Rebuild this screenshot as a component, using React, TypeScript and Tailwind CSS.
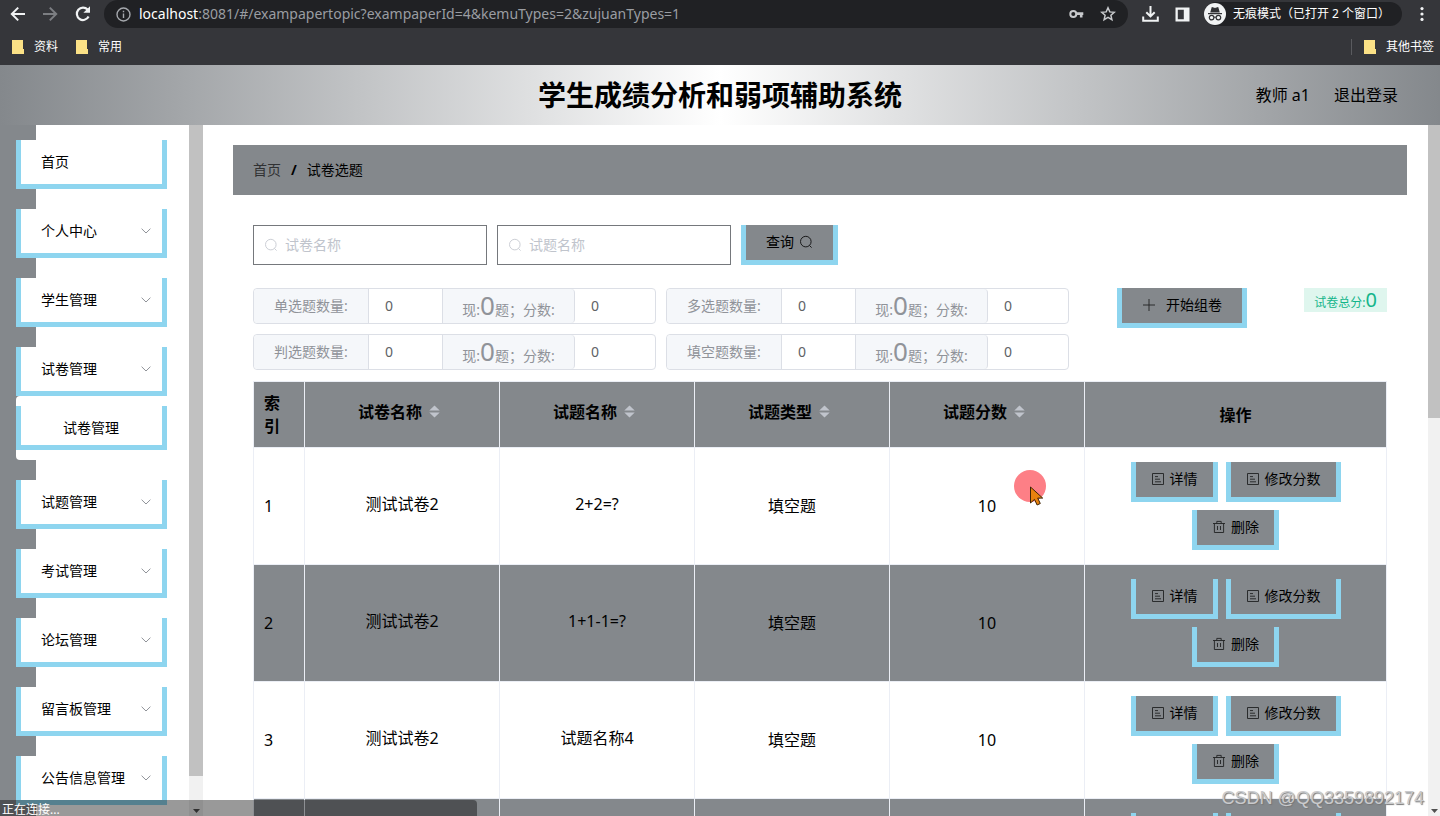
import { ReactNode } from "react";

const menus = [
    { name: "首页", arrow: false },
    { name: "个人中心", arrow: true },
    { name: "学生管理", arrow: true },
    { name: "试卷管理", arrow: true, children: ["试卷管理"] },
    { name: "试题管理", arrow: true },
    { name: "考试管理", arrow: true },
    { name: "论坛管理", arrow: true },
    { name: "留言板管理", arrow: true },
    { name: "公告信息管理", arrow: true },
];

const counts = ["单选题数量:", "多选题数量:", "判选题数量:", "填空题数量:"];

const columns = ["试卷名称", "试题名称", "试题类型", "试题分数"];

const topics = [
    { id: 1, paper: "测试试卷2", title: "2+2=?", type: "填空题", score: 10 },
    { id: 2, paper: "测试试卷2", title: "1+1-1=?", type: "填空题", score: 10 },
    { id: 3, paper: "测试试卷2", title: "试题名称4", type: "填空题", score: 10 },
    { id: 4, paper: "测试试卷2", title: "试题名称3", type: "填空题", score: 10 },
];

/* Icons */
const SearchIcon = () => (
    <svg className="size-[14px] shrink-0 opacity-80" viewBox="0 0 14 14" fill="none" stroke="currentColor">
        <circle cx="6.8" cy="6.6" r="5.3" />
        <path d="M10.4 10.4 12.6 12.6" />
    </svg>
);

const DocumentIcon = () => (
    <svg className="size-[14px] shrink-0 opacity-75" viewBox="0 0 14 14" fill="none" stroke="currentColor" strokeWidth="0.9">
        <path d="M1.5 1.5h11v11h-11zM4 4.6h3M4 7.2h5M4 9.8h6" />
    </svg>
);

const TrashIcon = () => (
    <svg className="size-[14px] shrink-0 opacity-75" viewBox="0 0 14 14" fill="none" stroke="currentColor" strokeWidth="0.9">
        <path d="M1 3.5h12M4.8 3.3V1.4h4.4v1.9M2.4 3.5v9h9.2v-9M5.5 6v4M8.5 6v4" />
    </svg>
);

const PlusIcon = () => (
    <svg className="size-[14px] shrink-0 opacity-75" viewBox="0 0 14 14" fill="none" stroke="currentColor" strokeWidth="0.9">
        <path d="M7 1v12M1 7h12" />
    </svg>
);

const ArrowDown = () => (
    <svg className="w-[10px] h-[6px]" viewBox="0 0 10 6" fill="none" stroke="#909399">
        <path d="M0.6 0.7 5 5 9.4 0.7" />
    </svg>
);

const SortIcon = () => (
    <svg className="w-[11px] h-[13px]" viewBox="0 0 11 13" fill="#c0c4cc">
        <path d="M5.5 0.5 10.7 5.5H0.3zM5.5 12.5 0.3 7.5h10.4z" />
    </svg>
);

const FolderIcon = () => (
    <svg className="w-[12px] h-[14px]" viewBox="0 0 12 14">
        <path d="M0 0h11v9h1v5H0z" fill="#fbe186" />
    </svg>
);

const ScrollArrow = () => (
    <svg className="w-[7px] h-[4px] mb-[3px]" viewBox="0 0 7 4" fill="#505050">
        <path d="M0 0h7L3.5 4z" />
    </svg>
);

const BlueButton = ({ children, wide }: { children: ReactNode; wide?: boolean }) => (
    <button
        type="button"
        className={`h-10 shrink-0 flex items-center gap-[5px] border-[5px] border-t-0 border-[#8ed5ef] bg-[#84888c] pb-px text-sm text-black ${wide ? "px-5" : "px-[15px]"
            }`}
    >
        {children}
    </button>
);

const BrowserBar = () => (
    <div className="shrink-0 bg-[#35363a] text-[#e8eaed]">
        <div className="h-7 flex items-center pl-[10px] pr-4">
            <button type="button" aria-label="back">
                <svg className="size-4" viewBox="0 0 16 16" fill="none" stroke="#f1f3f4" strokeWidth="2">
                    <path d="M15 8H2M8.2 1.6 1.8 8l6.4 6.4" />
                </svg>
            </button>
            <button type="button" aria-label="forward" className="ml-4">
                <svg className="size-4" viewBox="0 0 16 16" fill="none" stroke="#7c7e82" strokeWidth="2">
                    <path d="M1 8h13M7.8 1.6 14.2 8l-6.4 6.4" />
                </svg>
            </button>
            <button type="button" aria-label="reload" className="ml-4">
                <svg className="size-[18px]" viewBox="0 0 18 18" fill="none" stroke="#f1f3f4" strokeWidth="2.2">
                    <path d="M14.6 11.6A6.2 6.2 0 1 1 13.6 4.6" />
                    <path d="M16 1.2v6.6H9.4z" fill="#f1f3f4" stroke="none" />
                </svg>
            </button>
            <div className="ml-3 h-7 flex-1 flex items-center rounded-full bg-[#202124] px-3 text-sm">
                <svg className="size-[15px]" viewBox="0 0 15 15" fill="none" stroke="#a5a8ad" strokeWidth="1.4">
                    <circle cx="7.5" cy="7.5" r="6.5" />
                    <path d="M7.5 6.6v4.4M7.5 3.8v1.5" />
                </svg>
                <label htmlFor="url" className="ml-2 text-white">localhost</label>
                <input
                    id="url"
                    className="flex-1 min-w-0 bg-transparent text-[#9a9da2] outline-none"
                    defaultValue=":8081/#/exampapertopic?exampaperId=4&kemuTypes=2&zujuanTypes=1"
                />
                <svg className="w-[15px] h-[10px]" viewBox="0 0 15 10" fill="none" stroke="#c8cacd" strokeWidth="2">
                    <circle cx="4.3" cy="5" r="3" />
                    <path d="M7.3 4.6h7M12.2 4.6v4" strokeWidth="2.6" />
                </svg>
                <svg className="ml-4 size-4" viewBox="0 0 16 16" fill="none" stroke="#c8cacd" strokeWidth="1.5">
                    <path d="m8 1.8 1.8 4.1 4.5.4-3.4 3 1 4.4L8 11.4l-3.9 2.3 1-4.4-3.4-3 4.5-.4z" />
                </svg>
            </div>
            <svg className="ml-[14px] w-[17px] h-4" viewBox="0 0 17 16" fill="none" stroke="#f1f3f4" strokeWidth="2">
                <path d="M8.5 0v10M4.3 6.2l4.2 4.2 4.2-4.2M1.2 10.5v4.3h14.6v-4.3" />
            </svg>
            <svg className="ml-4 size-[15px]" viewBox="0 0 15 15">
                <path d="M0.5 0.5h14v14h-14zM2.8 2.8v9.4h6V2.8z" fill="#f1f3f4" fillRule="evenodd" />
            </svg>
            <div className="ml-[14px] h-6 flex items-center gap-[7px] rounded-full bg-[#202124] pr-3 text-xs text-white">
                <svg className="size-[22px]" viewBox="0 0 22 22">
                    <circle cx="11" cy="11" r="11" fill="#f1f3f4" />
                    <path d="M4 10.6h14M7 9l1.2-4.2 2.8.7 2.8-.7L15 9z" fill="#303134" stroke="#303134" strokeWidth="1.2" />
                    <circle cx="7.6" cy="14.6" r="2.3" fill="none" stroke="#303134" strokeWidth="1.2" />
                    <circle cx="14.4" cy="14.6" r="2.3" fill="none" stroke="#303134" strokeWidth="1.2" />
                    <path d="M9.8 14.2h2.4" stroke="#303134" />
                </svg>
                <span>无痕模式（已打开 2 个窗口）</span>
            </div>
            <svg className="ml-[18px] w-1 h-4" viewBox="0 0 4 16" fill="#f1f3f4">
                <circle cx="2" cy="2.6" r="1.6" />
                <circle cx="2" cy="8" r="1.6" />
                <circle cx="2" cy="13.4" r="1.6" />
            </svg>
        </div>
        <div className="h-[37px] flex items-center pl-3 pr-[6px] text-xs text-white">
            <a href="#" className="flex items-center gap-[10px]"><FolderIcon />资料</a>
            <a href="#" className="ml-[18px] flex items-center gap-[10px]"><FolderIcon />常用</a>
            <span className="ml-auto h-4 w-px bg-[#5a5b5f]" />
            <a href="#" className="ml-3 flex items-center gap-[10px]"><FolderIcon />其他书签</a>
        </div>
    </div>
);

const Sidebar = () => (
    <aside className="flex shrink-0">
        <ul className="w-[189px] overflow-hidden bg-[linear-gradient(to_right,#84888c_36px,#fff_36px)]">
            {menus.map((menu, i) => (
                <li key={menu.name} className={`pl-4 ${i === 0 ? "pt-[15px]" : "pt-5"}`}>
                    <button
                        type="button"
                        className="w-[151px] h-[49px] flex items-center justify-between border-[5px] border-t-0 border-[#8ed5ef] bg-white pl-5 pr-[11px] text-sm text-black"
                    >
                        {menu.name}
                        {menu.arrow && <ArrowDown />}
                    </button>
                    {menu.children && (
                        <ul className="rounded-sm bg-white py-[10px]">
                            {menu.children.map((child) => (
                                <li key={child}>
                                    <a
                                        href="#"
                                        className="w-[151px] h-11 flex items-center border-[5px] border-t-0 border-[#8ed5ef] bg-white pl-[42px] pt-1 text-sm text-black"
                                    >
                                        {child}
                                    </a>
                                </li>
                            ))}
                        </ul>
                    )}
                </li>
            ))}
        </ul>
        <div className="w-[14px] flex flex-col bg-[#f1f1f1]">
            <div className="flex-[651] bg-[#c1c1c1]" />
            <div className="flex-[40] flex items-end justify-center"><ScrollArrow /></div>
        </div>
    </aside>
);

const CountGroup = ({ label, id }: { label: string; id: string }) => (
    <div className="h-9 flex rounded border border-[#dcdfe6] text-sm leading-[34px] text-[#909399]">
        <label htmlFor={`${id}-num`} className="w-[115px] rounded-l bg-[#f5f7fa] border-r border-[#dcdfe6] text-center">{label}</label>
        <input id={`${id}-num`} defaultValue="0" className="w-[73px] pl-4 text-[#606266] outline-none" />
        <label
            htmlFor={`${id}-score`}
            className="w-[133px] rounded-r bg-[#f5f7fa] border-x border-[#dcdfe6] flex items-baseline justify-center leading-8"
        >
            现:<span className="text-[26px] leading-8">0</span>题；分数:
        </label>
        <input id={`${id}-score`} defaultValue="0" className="w-20 rounded-r pl-4 text-[#606266] outline-none" />
    </div>
);

const SearchInput = ({ placeholder }: { placeholder: string }) => (
    <label className="w-[234px] h-10 flex items-center gap-[7px] border border-[#75787c] pl-[10px] text-[#c0c4cc]">
        <SearchIcon />
        <input
            aria-label={placeholder}
            placeholder={placeholder}
            className="flex-1 min-w-0 text-sm text-[#606266] placeholder:text-[#c0c4cc] outline-none"
        />
    </label>
);

const TopicTable = () => (
    <table className="mt-[11px] w-full table-fixed border-collapse text-base text-black">
        <colgroup>
            <col className="w-[51px]" />
            <col />
            <col />
            <col />
            <col />
            <col className="w-[302px]" />
        </colgroup>
        <thead>
            <tr className="h-[66px] bg-[#84888c]">
                <th className="border border-[#ebeef5] px-[10px] text-left leading-[23px]">索引</th>
                {columns.map((col) => (
                    <th key={col} className="border border-[#ebeef5]">
                        <span className="flex items-center justify-center gap-[7px] pb-[6px] pr-[6px]">{col}<SortIcon /></span>
                    </th>
                ))}
                <th className="border border-[#ebeef5]">操作</th>
            </tr>
        </thead>
        <tbody>
            {topics.map((topic) => (
                <tr key={topic.id} className="h-[117px] text-center even:bg-[#84888c]">
                    <td className="border border-[#ebeef5] px-[10px] text-left">{topic.id}</td>
                    <td className="border border-[#ebeef5] pb-1">{topic.paper}</td>
                    <td className="border border-[#ebeef5] pb-1">{topic.title}</td>
                    <td className="border border-[#ebeef5]">{topic.type}</td>
                    <td className="border border-[#ebeef5]">{topic.score}</td>
                    <td className="border border-[#ebeef5]">
                        <div className="flex flex-wrap justify-center gap-2 px-10">
                            <BlueButton><DocumentIcon />详情</BlueButton>
                            <BlueButton><DocumentIcon />修改分数</BlueButton>
                            <BlueButton><TrashIcon />删除</BlueButton>
                        </div>
                    </td>
                </tr>
            ))}
        </tbody>
    </table>
);

const App = () => {
    return (
        <div className="relative h-screen flex flex-col overflow-hidden bg-white font-['Noto_Sans','Noto_Sans_CJK_SC',sans-serif]">
            <BrowserBar />

            {/* Header */}
            <header className="h-[60px] shrink-0 grid grid-cols-[1fr_auto_1fr] items-center bg-[linear-gradient(to_right,#84888c,#fff,#84888c)] px-[42px] text-black">
                <h1 className="col-start-2 text-[28px] leading-9 font-bold">学生成绩分析和弱项辅助系统</h1>
                <div className="flex justify-end gap-6 text-base">
                    <span>教师 a1</span>
                    <a href="#">退出登录</a>
                </div>
            </header>

            <div className="flex-1 min-h-0 flex">
                <Sidebar />

                <main className="flex-1 min-w-0 overflow-hidden pl-[30px] pr-[21px] pt-5">
                    {/* Breadcrumb */}
                    <nav className="h-[50px] flex items-center gap-[10px] bg-[#84888c] px-5 text-sm text-black">
                        <a href="#" className="text-[#303133]">首页</a>
                        <span className="font-bold">/</span>
                        <span>试卷选题</span>
                    </nav>

                    <div className="px-5 pt-[30px]">
                        <form className="flex gap-[10px]">
                            <SearchInput placeholder="试卷名称" />
                            <SearchInput placeholder="试题名称" />
                            <BlueButton wide>查询<SearchIcon /></BlueButton>
                        </form>

                        <div className="mt-[23px] flex items-start">
                            <div className="grid grid-cols-2 gap-[10px]">
                                {counts.map((label, i) => (
                                    <CountGroup key={label} label={label} id={`count-${i}`} />
                                ))}
                            </div>
                            <div className="flex-1 pl-12 flex items-start justify-between">
                                <BlueButton wide><PlusIcon /><span className="pl-[5px]">开始组卷</span></BlueButton>
                                <span className="h-6 flex items-baseline bg-[#dff6ee] px-[10px] text-xs leading-6 text-[#13b58a]">
                                    试卷总分:<span className="text-xl leading-6">0</span>
                                </span>
                            </div>
                        </div>

                        <TopicTable />
                    </div>
                </main>

                <div className="w-3 flex flex-col bg-[#f1f1f1]">
                    <div className="flex-[293] bg-[#c1c1c1]" />
                    <div className="flex-[398] flex items-end justify-center"><ScrollArrow /></div>
                </div>
            </div>

            {/* Loading status */}
            <div className="absolute left-0 bottom-0 w-[477px] h-4 rounded-tr bg-black/40 pl-[2px] text-xs leading-5 text-white">
                正在连接...
            </div>

            {/* Pointer */}
            <svg className="absolute left-[1014px] top-[470px] w-8 h-9" viewBox="0 0 32 36">
                <circle cx="16" cy="16" r="16" fill="#fd7f86" />
                <path d="M16.5 17v16l4-3.6 2.6 5.6 3.2-1.5-2.6-5.4h5z" fill="#e8820e" stroke="#3d2408" />
            </svg>

            <span className="absolute right-4 bottom-2 font-['Liberation_Sans',sans-serif] text-lg leading-5 text-[#c9cacc] [text-shadow:1px_1px_1px_#777]">
                CSDN @QQ3359892174
            </span>
        </div>
    );
};

export default App;
